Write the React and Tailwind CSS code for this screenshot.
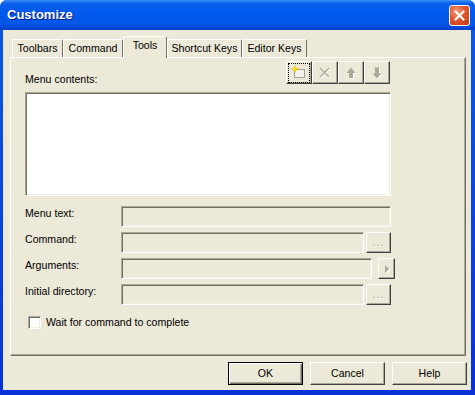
import React from "react";

const raised =
  "border border-t-white border-l-white border-r-[#404040] border-b-[#404040] shadow-[inset_-1px_-1px_0_#ACA899]";
const sunken =
  "border border-t-[#ACA899] border-l-[#ACA899] border-r-white border-b-white shadow-[inset_1px_1px_0_#716F64,inset_-1px_-1px_0_#F1EFE2]";

function NewIcon() {
  return (
    <svg width="16" height="16" viewBox="0 0 16 16">
      <rect x="3.5" y="4.5" width="10" height="8" fill="#F4F2EA" stroke="#555" strokeDasharray="1 1" />
      <path d="M4 0.5 L5 3 L7.5 4 L5 5 L4 7.5 L3 5 L0.5 4 L3 3 Z" fill="#F5E400" stroke="#D8C000" strokeWidth="0.4" />
    </svg>
  );
}

function XIcon() {
  return (
    <svg width="16" height="16" viewBox="0 0 16 16">
      <path d="M3 3 L12 12 M12 3 L3 12" stroke="#fff" strokeWidth="1.3" transform="translate(1 1)" />
      <path d="M3 3 L12 12 M12 3 L3 12" stroke="#ACA899" strokeWidth="1.3" />
    </svg>
  );
}

function UpIcon() {
  const d = "M8 2.5 L12.5 8 L10 8 L10 13 L6 13 L6 8 L3.5 8 Z";
  return (
    <svg width="16" height="16" viewBox="0 0 16 16">
      <path d={d} fill="#fff" transform="translate(1 1)" />
      <path d={d} fill="#ACA899" />
    </svg>
  );
}

function DownIcon() {
  const d = "M5.5 2.5 L10 2.5 L10 8.5 L12.5 8.5 L8 13.5 L3.5 8.5 L6 8.5 L6 5 Z";
  return (
    <svg width="16" height="16" viewBox="0 0 16 16">
      <path d={d} fill="#fff" transform="translate(1 1)" />
      <path d={d} fill="#ACA899" />
    </svg>
  );
}

function Tab({ label, w, selected }) {
  if (selected) {
    return (
      <div
        className="relative z-10 -mb-px flex h-[22px] items-center justify-center rounded-t-[3px] border-l border-t border-r border-l-white border-t-white border-r-[#716F64] bg-[#ECE9D8] pb-[3px]"
        style={{ width: w }}
      >
        {label}
      </div>
    );
  }
  return (
    <div
      className="flex h-[18px] items-center justify-center rounded-t-[2px] border-l border-t border-r border-l-white border-t-white border-r-[#716F64] bg-[#ECE9D8]"
      style={{ width: w }}
    >
      {label}
    </div>
  );
}

function Field({ w }) {
  return <div className={`h-[21px] bg-[#ECE9D8] ${sunken}`} style={{ width: w }} />;
}

function SmallBtn({ w, children }) {
  return (
    <div className={`flex h-[21px] items-center justify-center bg-[#ECE9D8] ${raised}`} style={{ width: w }}>
      {children}
    </div>
  );
}

function Dots() {
  return (
    <span className="relative text-[11px] leading-none tracking-[1px] text-[#ACA899] [text-shadow:1px_1px_0_#fff]">
      ...
    </span>
  );
}

function Row({ label, children }) {
  return (
    <div className="flex h-[21px] items-start">
      <div className="w-[96px] leading-[14px]">{label}</div>
      <div className="flex gap-[2px]">{children}</div>
    </div>
  );
}

function DlgButton({ label, def }) {
  return (
    <div
      className={`flex h-[23px] w-[75px] items-center justify-center bg-[#ECE9D8] ${
        def
          ? "border border-black shadow-[inset_1px_1px_0_#fff,inset_-1px_-1px_0_#716F64,inset_-2px_-2px_0_#ACA899]"
          : raised
      }`}
    >
      {label}
    </div>
  );
}

export default function App() {
  return (
    <div className="h-[395px] w-[475px] bg-white font-['Liberation_Sans',Arial,sans-serif] text-[10.6px] text-black">
      <div className="flex h-[395px] w-[475px] flex-col overflow-hidden rounded-t-[7px] bg-[linear-gradient(180deg,#0A5BE8_0%,#0831D9_100%)]">
        {/* Title bar */}
        <div className="flex h-[30px] items-center justify-between bg-[linear-gradient(180deg,#3C8FF8_0%,#0A5FEB_12%,#0058EE_45%,#0557E8_80%,#0446D6_94%,#0A3CC0_100%)] pl-[7px] pr-[5px]">
          <span className="text-[13px] font-bold text-white [text-shadow:1px_1px_0_#0A1883]">Customize</span>
          <div className="flex h-[21px] w-[21px] items-center justify-center rounded-[3px] border border-white bg-[radial-gradient(circle_at_35%_30%,#F09A7A_0%,#E2562E_45%,#C23A14_100%)]">
            <svg width="11" height="11" viewBox="0 0 11 11">
              <path d="M1.5 1.5 L9.5 9.5 M9.5 1.5 L1.5 9.5" stroke="#fff" strokeWidth="2" strokeLinecap="square" />
            </svg>
          </div>
        </div>
        {/* Body */}
        <div className="mb-[5px] ml-[3px] mr-[4px] flex flex-1 flex-col bg-[#ECE9D8]">
          {/* Tabs */}
          <div className="ml-[9px] mt-[6px] flex h-[21px] items-end">
            <Tab label="Toolbars" w={51} />
            <Tab label="Command" w={60} />
            <Tab label="Tools" w={44} selected />
            <Tab label="Shortcut Keys" w={75} />
            <Tab label="Editor Keys" w={65} />
          </div>
          {/* Panel */}
          <div className="ml-[7px] h-[299px] w-[456px] border border-t-white border-l-white border-r-[#716F64] border-b-[#716F64] pl-[14px] pt-[3px] shadow-[inset_-1px_-1px_0_#ACA899]">
            <div className="flex w-[365px] items-start justify-between">
              <div className="mt-[12px] leading-[13px]">Menu contents:</div>
              <div className="flex">
                <div className={`flex h-[23px] w-[26px] items-center justify-center bg-[#ECE9D8] ${raised}`}>
                  <div className="flex h-[18px] w-[20px] items-center justify-center outline outline-1 outline-dotted outline-black">
                    <NewIcon />
                  </div>
                </div>
                <div className={`flex h-[23px] w-[26px] items-center justify-center bg-[#ECE9D8] ${raised}`}>
                  <XIcon />
                </div>
                <div className={`flex h-[23px] w-[26px] items-center justify-center bg-[#ECE9D8] ${raised}`}>
                  <UpIcon />
                </div>
                <div className={`flex h-[23px] w-[26px] items-center justify-center bg-[#ECE9D8] ${raised}`}>
                  <DownIcon />
                </div>
              </div>
            </div>
            <div className={`mt-[6px] h-[104px] w-[366px] bg-white ${sunken}`} />
            <div className="mt-[10px] flex flex-col gap-[5px]">
              <Row label="Menu text:">
                <Field w={270} />
              </Row>
              <Row label="Command:">
                <Field w={243} />
                <SmallBtn w={25}>
                  <Dots />
                </SmallBtn>
              </Row>
              <Row label="Arguments:">
                <Field w={251} />
                <div className="w-[2px]" />
                <SmallBtn w={17}>
                  <svg width="6" height="8" viewBox="0 0 6 8">
                    <path d="M1 0 L5 4 L1 8 Z" fill="#fff" transform="translate(1 1)" />
                    <path d="M1 0 L5 4 L1 8 Z" fill="#ACA899" />
                  </svg>
                </SmallBtn>
              </Row>
              <Row label="Initial directory:">
                <Field w={243} />
                <SmallBtn w={25}>
                  <Dots />
                </SmallBtn>
              </Row>
            </div>
            <div className="ml-[3px] mt-[10px] flex items-center gap-[5px]">
              <div className={`h-[13px] w-[13px] bg-white ${sunken}`} />
              <span>Wait for command to complete</span>
            </div>
          </div>
          {/* Buttons */}
          <div className="mr-[4px] mt-[6px] flex justify-end gap-[7px]">
            <DlgButton label="OK" def />
            <DlgButton label="Cancel" />
            <DlgButton label="Help" />
          </div>
        </div>
      </div>
    </div>
  );
}
